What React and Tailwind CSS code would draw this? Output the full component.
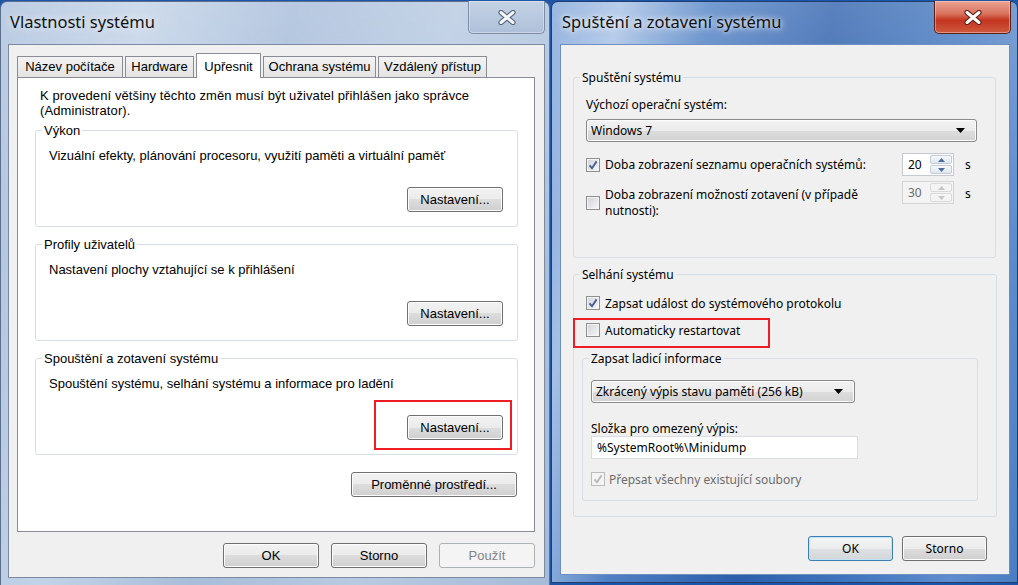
import React from 'react';

const leftFont = "font-['Liberation_Sans',Arial,sans-serif]";
const rightFont = "font-['Noto_Sans','Open_Sans',sans-serif]";

function Button({ children, className = '', disabled, primary }) {
  let look =
    'flex h-[25px] items-center justify-center rounded-[3px] border border-[#707070] bg-[linear-gradient(#f2f2f2_0%,#ebebeb_50%,#dddddd_50%,#cfcfcf_100%)] shadow-[inset_0_0_0_1px_#fcfcfc]';
  if (disabled)
    look = 'flex h-[25px] items-center justify-center rounded-[3px] border border-[#adb2b5] bg-[#f4f4f4] text-[#838383]';
  if (primary)
    look =
      'flex h-[25px] items-center justify-center rounded-[3px] border border-[#3c7fb1] bg-[linear-gradient(#f4f4f4_0%,#ececec_50%,#dfe2e4_50%,#d2d6d9_100%)] shadow-[inset_0_0_0_1px_#bfe3f7]';
  return <div className={`${look} ${className}`}>{children}</div>;
}

function Check({ checked, disabled }) {
  return (
    <span
      className={
        disabled
          ? 'flex h-[14px] w-[14px] shrink-0 items-center justify-center border border-[#bcbcbc] bg-[#f4f4f4]'
          : 'flex h-[14px] w-[14px] shrink-0 items-center justify-center border border-[#8f8f8f] bg-[linear-gradient(135deg,#cdd1d7,#f9f9f9)] shadow-[inset_0_0_0_1px_#f4f4f4]'
      }
    >
      {checked && (
        <svg width="10" height="10" viewBox="0 0 10 10">
          <path d="M1.5 5.3 L4 8.2 L8.6 1.4" fill="none" stroke={disabled ? '#b9b9b9' : '#4a5f97'} strokeWidth="1.9" />
        </svg>
      )}
    </span>
  );
}

function Spinner({ value, disabled }) {
  const arrow = disabled ? '#c6c6c6' : '#4d6ba0';
  const part = disabled
    ? 'flex flex-1 items-center justify-center rounded-[2px] border border-[#dadada] bg-[#f4f4f4]'
    : 'flex flex-1 items-center justify-center rounded-[2px] border border-[#c3ccd8] bg-[linear-gradient(#f7f9fb,#dfe6ee)]';
  return (
    <div
      className={
        disabled
          ? 'flex h-[23px] w-[52px] border border-[#d5d5d5] bg-[#f4f4f4] text-[#6d6d6d]'
          : 'flex h-[23px] w-[52px] border border-[#c5c8ce] bg-white'
      }
    >
      <span className="flex-1 pl-[5px] leading-[21px]">{value}</span>
      <div className="flex w-[24px] flex-col gap-px p-px">
        <span className={part}>
          <svg width="7" height="4" viewBox="0 0 7 4">
            <path d="M0 4 L3.5 0 L7 4Z" fill={arrow} />
          </svg>
        </span>
        <span className={part}>
          <svg width="7" height="4" viewBox="0 0 7 4">
            <path d="M0 0 L3.5 4 L7 0Z" fill={arrow} />
          </svg>
        </span>
      </div>
    </div>
  );
}

function Combo({ children, className = '' }) {
  return (
    <div
      className={`flex h-[23px] items-center justify-between rounded-[3px] border border-[#8a8a8a] bg-[linear-gradient(#f3f3f3_0%,#ebebeb_50%,#dddddd_50%,#d3d3d3_100%)] pl-[4px] pr-[11px] shadow-[inset_0_0_0_1px_#fbfbfb] ${className}`}
    >
      <span>{children}</span>
      <svg width="9" height="5" viewBox="0 0 9 5">
        <path d="M0 0 H9 L4.5 5Z" fill="#000" />
      </svg>
    </div>
  );
}

function CloseX({ active }) {
  return (
    <svg width="20" height="15" viewBox="0 0 20 15">
      <path d="M4 2.5 L16 12.5 M16 2.5 L4 12.5" stroke={active ? '#5b2218' : '#56647a'} strokeWidth="5.2" strokeLinecap="round" />
      <path d="M4 2.5 L16 12.5 M16 2.5 L4 12.5" stroke={active ? '#ffffff' : '#f4f7fb'} strokeWidth="3" strokeLinecap="round" />
    </svg>
  );
}

// padding goes on the inner div so the legend stays 9px from the box edge
function Group({ label, className = '', inner = '', children }) {
  return (
    <fieldset className={`rounded-[3px] border border-[#d5dfe5] ${className}`}>
      <legend className="ml-[6px] px-[2px] leading-[15px]">{label}</legend>
      <div className={inner}>{children}</div>
    </fieldset>
  );
}

function LeftGroup({ label, text, highlight, first }) {
  return (
    <Group label={label} className={`${first ? 'mt-[5px]' : 'mt-[10px]'} h-[104px]`} inner="pl-[13px] pr-[14px]">
      <p className="mt-[10px] leading-[15px]">{text}</p>
      <div className="mt-[24px] flex justify-end">
        <div className="relative">
          <Button className="w-[96px]">Nastavení...</Button>
          {highlight && <div className="absolute -left-[33px] -top-[15px] h-[50px] w-[138px] border-2 border-[#ee1c24]" />}
        </div>
      </div>
    </Group>
  );
}

const tabBase =
  'flex h-[21px] items-center justify-center border border-b-0 border-[#898c95] bg-[linear-gradient(#f3f3f3,#e3e3e3)]';

function SystemProperties() {
  return (
    <div
      className={`mt-px flex h-[584px] w-[550px] shrink-0 flex-col rounded-t-[7px] border border-b-0 border-[#5b6f8f] bg-[linear-gradient(180deg,rgba(255,255,255,0.18),rgba(255,255,255,0)_45%),linear-gradient(100deg,#aec2dd_0%,#c3d3e7_22%,#a8bdda_45%,#b8cae1_70%,#a6bbd8_100%)] pb-[7px] pl-[7px] pr-[4px] text-[13px] text-black`}
    >
      <div className="flex h-[42px] items-start justify-between">
        <span className={`${rightFont} ml-[2px] mt-[10px] text-[16.5px] leading-[20px] text-[#111] [text-shadow:0_0_9px_rgba(255,255,255,0.95)]`}>
          Vlastnosti systému
        </span>
        <div className="-mt-px flex h-[33px] w-[77px] items-center justify-center rounded-b-[5px] border border-t-0 border-[#7c8ca5] bg-[linear-gradient(#c4d2e5,#aec0d9)] shadow-[inset_0_0_0_1px_rgba(255,255,255,0.35)]">
          <CloseX />
        </div>
      </div>
      <div className={`${leftFont} flex h-[534px] w-[537px] flex-col border border-[#7b8aa1] bg-[#f0f0f0] pl-[8px] pr-[9px] pt-[8px]`}>
        <div className="flex items-end gap-[2px]">
          <div className={`${tabBase} w-[106px]`}>Název počítače</div>
          <div className={`${tabBase} w-[69px]`}>Hardware</div>
          <div className="relative z-10 -mb-px flex h-[25px] w-[65px] items-start justify-center border border-b-0 border-[#898c95] bg-white pt-[3px]">
            Upřesnit
          </div>
          <div className={`${tabBase} w-[113px]`}>Ochrana systému</div>
          <div className={`${tabBase} w-[109px]`}>Vzdálený přístup</div>
        </div>
        <div className="flex h-[455px] w-[518px] flex-col border border-[#898c95] bg-white pl-[17px] pr-[16px] pt-[10px]">
          <p className="ml-[5px] leading-[15px] tracking-[0.1px]">
            K provedení většiny těchto změn musí být uživatel přihlášen jako správce
            <br />
            (Administrator).
          </p>
          <LeftGroup first label="Výkon" text="Vizuální efekty, plánování procesoru, využití paměti a virtuální paměť" />
          <LeftGroup label="Profily uživatelů" text="Nastavení plochy vztahující se k přihlášení" />
          <LeftGroup
            label="Spouštění a zotavení systému"
            text="Spouštění systému, selhání systému a informace pro ladění"
            highlight
          />
          <div className="mt-[17px] flex justify-end pr-px">
            <Button className="w-[166px]">Proměnné prostředí...</Button>
          </div>
        </div>
        <div className="mt-[11px] flex justify-end gap-[12px]">
          <Button className="w-[96px]">OK</Button>
          <Button className="w-[96px]">Storno</Button>
          <Button className="w-[96px]" disabled>
            Použít
          </Button>
        </div>
      </div>
    </div>
  );
}

function StartupRecovery() {
  return (
    <div className="mt-px flex h-[582px] w-[467px] shrink-0 flex-col rounded-t-[7px] border border-[#1d3f73] bg-[linear-gradient(180deg,rgba(255,255,255,0.22),rgba(255,255,255,0)_40%),linear-gradient(100deg,#7ea4d8_0%,#a6c0e4_12%,#4f80c4_28%,#2d5fab_50%,#4277bf_72%,#5f8dcd_88%,#4a7dc3_100%)] pb-[7px] pl-[8px] pr-[6px] text-[12px] text-black">
      <div className="flex h-[42px] items-start justify-between">
        <span className={`${rightFont} ml-[2px] mt-[10px] text-[16.5px] leading-[20px] text-[#111] [text-shadow:0_0_9px_rgba(255,255,255,0.95),0_0_4px_rgba(255,255,255,0.8)]`}>
          Spuštění a zotavení systému
        </span>
        <div className="-mt-px flex h-[33px] w-[77px] items-center justify-center rounded-b-[5px] border border-t-0 border-[#5a1f16] bg-[linear-gradient(#e8a393_0%,#d9735e_40%,#c2341f_60%,#cf5a3e_100%)] shadow-[inset_0_0_0_1px_rgba(255,220,210,0.45)]">
          <CloseX active />
        </div>
      </div>
      <div className={`${rightFont} flex h-[531px] w-[450px] flex-col border border-[#6d8fbf] bg-[#f0f0f0] pl-[12px] pr-[13px] pt-[25px]`}>
        <Group label="Spuštění systému" className="h-[188px]" inner="pl-[12px] pr-[18px]">
          <p className="mt-[12px] leading-[15px]">Výchozí operační systém:</p>
          <Combo className="mt-[7px]">Windows 7</Combo>
          <div className="mt-[11px] flex items-center">
            <Check checked />
            <span className="ml-[5px] leading-[15px]">Doba zobrazení seznamu operačních systémů:</span>
            <div className="ml-auto">
              <Spinner value="20" />
            </div>
            <span className="ml-[11px] w-[12px] leading-[15px]">s</span>
          </div>
          <div className="mt-[5px] flex items-start">
            <div className="mt-[6px] flex items-center">
              <Check />
              <span className="ml-[5px] leading-[16px]">
                Doba zobrazení možností zotavení (v případě
                <br />
                nutnosti):
              </span>
            </div>
            <div className="ml-auto">
              <Spinner value="30" disabled />
            </div>
            <span className="ml-[11px] mt-[5px] w-[12px] leading-[15px]">s</span>
          </div>
        </Group>
        <Group label="Selhání systému" className="mt-[9px] h-[250px]" inner="pl-[12px] pr-[18px]">
          <div className="mt-[13px] flex h-[16px] items-center">
            <Check checked />
            <span className="ml-[5px] leading-[15px]">Zapsat událost do systémového protokolu</span>
          </div>
          <div className="relative mt-[11px] flex h-[16px] items-center">
            <Check />
            <span className="ml-[5px] leading-[15px]">Automaticky restartovat</span>
            <div className="absolute -left-[13px] -top-[4px] h-[30px] w-[197px] border-2 border-[#ee1c24]" />
          </div>
          <Group label="Zapsat ladicí informace" className="-ml-[4px] mt-[13px] h-[150px] w-[396px]" inner="pl-[8px]">
            <Combo className="mt-[14px] w-[264px]">Zkrácený výpis stavu paměti (256 kB)</Combo>
            <p className="mt-[18px] leading-[15px]">Složka pro omezený výpis:</p>
            <div className="flex h-[23px] w-[267px] items-center border border-[#d9dde3] bg-white pl-[5px]">
              %SystemRoot%\Minidump
            </div>
            <div className="mt-[12px] flex h-[16px] items-center text-[#6d6d6d]">
              <Check checked disabled />
              <span className="ml-[4px] leading-[15px]">Přepsat všechny existující soubory</span>
            </div>
          </Group>
        </Group>
        <div className="mt-[19px] flex justify-end gap-[9px] pr-[9px]">
          <Button className="w-[85px]" primary>
            OK
          </Button>
          <Button className="w-[85px]">Storno</Button>
        </div>
      </div>
    </div>
  );
}

export default function App() {
  return (
    <div className="flex h-[585px] w-[1018px] gap-px overflow-hidden bg-[#1f55a6]">
      <SystemProperties />
      <StartupRecovery />
    </div>
  );
}
